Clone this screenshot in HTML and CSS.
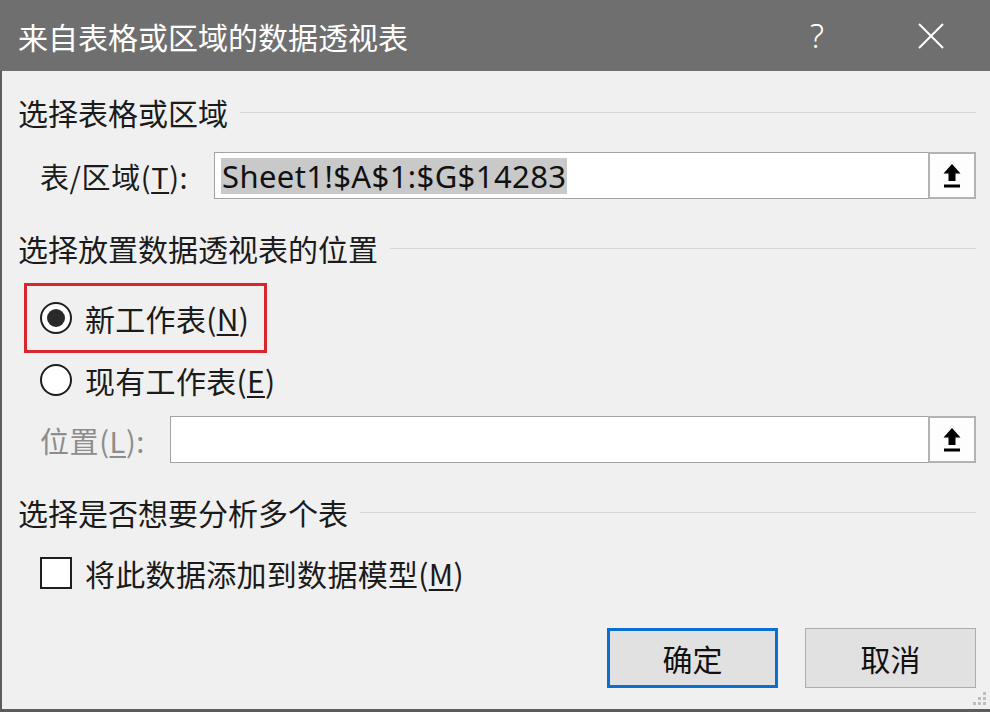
FILE: index.html
```html
<!DOCTYPE html>
<html lang="zh-CN">
<head>
<meta charset="utf-8">
<title>来自表格或区域的数据透视表</title>
<link rel="stylesheet" href="styles.css">
</head>
<body>
<div class="dialog">
  <div class="titlebar">
    <span class="title">来自表格或区域的数据透视表</span>
    <span class="help">?</span>
    <span class="close"><svg width="26" height="26" viewBox="0 0 26 26"><path d="M1 1L25 25M25 1L1 25" stroke="#fff" stroke-width="2" fill="none"/></svg></span>
  </div>
  <div class="body">
    <div class="heading h1"><span>选择表格或区域</span><i class="rule"></i></div>
    <div class="field-row r1">
      <span class="label lbl-table">表/区域(<u>T</u>):</span>
      <div class="input">
        <span class="value"><span class="sel">Sheet1!$A$1:$G$14283</span></span>
        <span class="pick"><svg width="20" height="26" viewBox="0 0 20 26"><path d="M10 1L1.5 10.5H6.5V18H13.5V10.5H18.5Z" fill="#000"/><rect x="2" y="21.5" width="16" height="3" fill="#000"/></svg></span>
      </div>
    </div>
    <div class="heading h2"><span>选择放置数据透视表的位置</span><i class="rule"></i></div>
    <div class="option boxed">
      <span class="radio checked"></span>
      <span class="opt-text">新工作表(<u>N</u>)</span>
    </div>
    <div class="option r-exist">
      <span class="radio"></span>
      <span class="opt-text">现有工作表(<u>E</u>)</span>
    </div>
    <div class="field-row r2">
      <span class="label dim">位置(<u>L</u>):</span>
      <div class="input">
        <span class="value"></span>
        <span class="pick"><svg width="20" height="26" viewBox="0 0 20 26"><path d="M10 1L1.5 10.5H6.5V18H13.5V10.5H18.5Z" fill="#000"/><rect x="2" y="21.5" width="16" height="3" fill="#000"/></svg></span>
      </div>
    </div>
    <div class="heading h3"><span>选择是否想要分析多个表</span><i class="rule"></i></div>
    <div class="option r-check">
      <span class="checkbox"></span>
      <span class="opt-text">将此数据添加到数据模型(<u>M</u>)</span>
    </div>
    <div class="buttons">
      <button class="btn primary">确定</button>
      <button class="btn">取消</button>
    </div>
    <div class="grip">
      <i style="right:4px;bottom:14px"></i>
      <i style="right:4px;bottom:9px"></i>
      <i style="right:9px;bottom:9px"></i>
      <i style="right:4px;bottom:4px"></i>
      <i style="right:9px;bottom:4px"></i>
      <i style="right:14px;bottom:4px"></i>
    </div>
  </div>
</div>
</body>
</html>
```
FILE: styles.css
```css
* { box-sizing: border-box; }
html, body {
  margin: 0;
  padding: 0;
  width: 990px;
  height: 712px;
  overflow: hidden;
  background: #f0f0f0;
  font-family: "Noto Sans CJK SC", "Noto Sans", sans-serif;
  color: #1b1b1b;
}
.dialog {
  width: 990px;
  height: 712px;
  display: flex;
  flex-direction: column;
}
.titlebar {
  height: 71px;
  flex: none;
  background: #6f6f6f;
  color: #fff;
  display: flex;
  align-items: center;
  padding-left: 18px;
}
.title {
  font-size: 30px;
  flex: 1;
}
.help {
  font-family: "Noto Sans", sans-serif;
  font-weight: 300;
  font-size: 33px;
  width: 30px;
  text-align: center;
  margin-right: 86px;
}
.close {
  width: 26px;
  height: 26px;
  margin-right: 46px;
  display: flex;
}
.body {
  flex: 1;
  position: relative;
  border-left: 2px solid #5c5c5c;
  border-bottom: 3px solid #5c5c5c;
  padding: 0 14px 0 16px;
  display: flex;
  flex-direction: column;
}
.heading {
  height: 40px;
  display: flex;
  align-items: center;
  font-size: 30px;
  line-height: 40px;
}
.heading .rule {
  flex: 1;
  height: 1px;
  background: #d6d6d6;
  margin-left: 12px;
  margin-top: 0;
}
.h1 { margin-top: 21px; }
.h2 { margin-top: 29px; }
.h3 { margin-top: 29px; }
.field-row {
  height: 47px;
  display: flex;
  align-items: center;
}
.r1 { margin-top: 20px; }
.r2 { margin-top: 16px; }
.label {
  font-size: 29px;
  padding-left: 22px;
  white-space: nowrap;
  letter-spacing: 0.6px;
}
.lbl-table { width: 196px; }
.dim { color: #8d8d8d; width: 152px; }
.input {
  flex: 1;
  height: 47px;
  background: #fff;
  border: 1px solid #a3a3a3;
  border-right: none;
  display: flex;
  align-items: stretch;
}
.value {
  flex: 1;
  display: flex;
  align-items: center;
  padding-left: 6px;
  font-family: "Noto Sans", sans-serif;
  font-size: 31px;
  letter-spacing: 0.4px;
  color: #111;
}
.sel {
  background: #c9c9c9;
  line-height: 36px;
  padding: 0 1px;
}
.pick {
  width: 48px;
  margin-top: -1px;
  margin-bottom: -1px;
  border: 2px solid #b3b3b3;
  background: #fdfdfd;
  display: flex;
  align-items: center;
  justify-content: center;
}
.option {
  display: flex;
  align-items: center;
  height: 40px;
  font-size: 30px;
  letter-spacing: 0.3px;
}
.opt-text { margin-left: 13px; }
.boxed {
  margin-top: 15px;
  margin-left: 6px;
  width: 243px;
  height: 70px;
  border: 3px solid #d9252c;
  padding-left: 13px;
}
.r-exist { margin-top: 7px; padding-left: 22px; }
.r-check { margin-top: 21px; padding-left: 22px; }
.radio {
  width: 32px;
  height: 32px;
  border-radius: 50%;
  border: 2px solid #1e1e1e;
  background: #fff;
  flex: none;
  display: flex;
  align-items: center;
  justify-content: center;
}
.radio.checked::after {
  content: "";
  width: 18px;
  height: 18px;
  border-radius: 50%;
  background: #2a2a2a;
}
.checkbox {
  width: 32px;
  height: 32px;
  border: 2px solid #1e1e1e;
  background: #fff;
  flex: none;
}
u { text-decoration-thickness: 2px; text-underline-offset: 3px; }
.buttons {
  margin-top: 35px;
  display: flex;
  justify-content: flex-end;
  gap: 27px;
}
.btn {
  width: 171px;
  height: 60px;
  background: #e1e1e1;
  border: 1px solid #adadad;
  font-family: "Noto Sans CJK SC", sans-serif;
  font-size: 30px;
  color: #111;
  padding: 0;
}
.btn.primary {
  border: 3px solid #0a6fd0;
}
.grip {
  position: absolute;
  right: 0;
  bottom: 0;
  width: 22px;
  height: 22px;
}
.grip i {
  position: absolute;
  width: 3px;
  height: 3px;
  background: #bdbdbd;
}
```
